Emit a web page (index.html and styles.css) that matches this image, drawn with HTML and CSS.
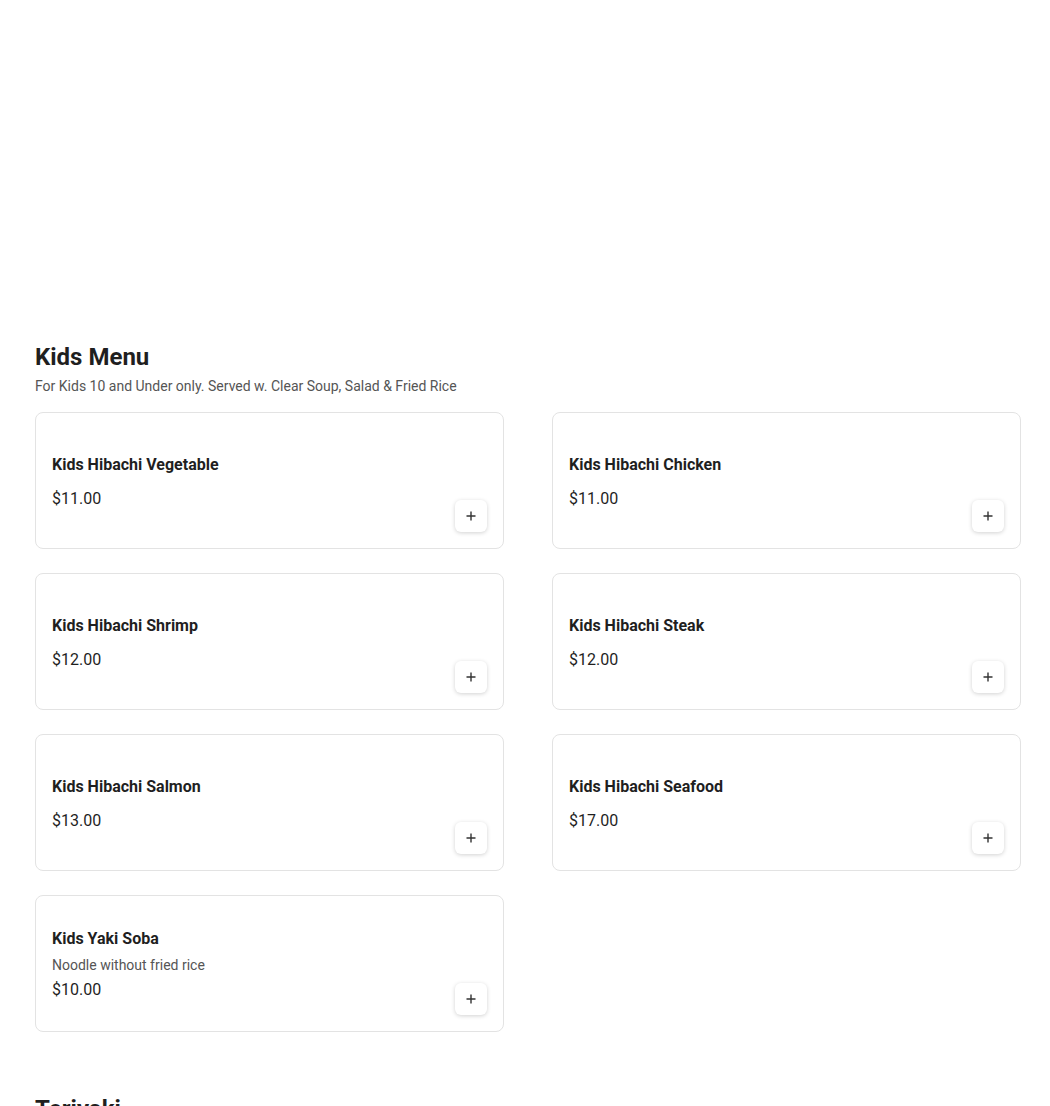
FILE: index.html
```html
<!DOCTYPE html>
<html lang="en">
<head>
<meta charset="utf-8">
<title>Menu</title>
<link rel="stylesheet" href="styles.css">
</head>
<body>
<main class="menu">
  <div class="hero-space"></div>

  <section class="category">
    <h2 class="category-title">Kids Menu</h2>
    <p class="category-desc">For Kids 10 and Under only. Served w. Clear Soup, Salad &amp; Fried Rice</p>
    <div class="items">
      <div class="item">
        <div class="item-info">
          <div class="item-name">Kids Hibachi Vegetable</div>
          <div class="item-price">$11.00</div>
        </div>
        <button class="add-btn" aria-label="Add"><svg viewBox="0 0 12 12" width="12" height="12"><path d="M6 1.5v9M1.5 6h9" stroke="#333" stroke-width="1.4" fill="none"/></svg></button>
      </div>
      <div class="item">
        <div class="item-info">
          <div class="item-name">Kids Hibachi Chicken</div>
          <div class="item-price">$11.00</div>
        </div>
        <button class="add-btn" aria-label="Add"><svg viewBox="0 0 12 12" width="12" height="12"><path d="M6 1.5v9M1.5 6h9" stroke="#333" stroke-width="1.4" fill="none"/></svg></button>
      </div>
      <div class="item">
        <div class="item-info">
          <div class="item-name">Kids Hibachi Shrimp</div>
          <div class="item-price">$12.00</div>
        </div>
        <button class="add-btn" aria-label="Add"><svg viewBox="0 0 12 12" width="12" height="12"><path d="M6 1.5v9M1.5 6h9" stroke="#333" stroke-width="1.4" fill="none"/></svg></button>
      </div>
      <div class="item">
        <div class="item-info">
          <div class="item-name">Kids Hibachi Steak</div>
          <div class="item-price">$12.00</div>
        </div>
        <button class="add-btn" aria-label="Add"><svg viewBox="0 0 12 12" width="12" height="12"><path d="M6 1.5v9M1.5 6h9" stroke="#333" stroke-width="1.4" fill="none"/></svg></button>
      </div>
      <div class="item">
        <div class="item-info">
          <div class="item-name">Kids Hibachi Salmon</div>
          <div class="item-price">$13.00</div>
        </div>
        <button class="add-btn" aria-label="Add"><svg viewBox="0 0 12 12" width="12" height="12"><path d="M6 1.5v9M1.5 6h9" stroke="#333" stroke-width="1.4" fill="none"/></svg></button>
      </div>
      <div class="item">
        <div class="item-info">
          <div class="item-name">Kids Hibachi Seafood</div>
          <div class="item-price">$17.00</div>
        </div>
        <button class="add-btn" aria-label="Add"><svg viewBox="0 0 12 12" width="12" height="12"><path d="M6 1.5v9M1.5 6h9" stroke="#333" stroke-width="1.4" fill="none"/></svg></button>
      </div>
      <div class="item">
        <div class="item-info">
          <div class="item-name">Kids Yaki Soba</div>
          <div class="item-desc">Noodle without fried rice</div>
          <div class="item-price">$10.00</div>
        </div>
        <button class="add-btn" aria-label="Add"><svg viewBox="0 0 12 12" width="12" height="12"><path d="M6 1.5v9M1.5 6h9" stroke="#333" stroke-width="1.4" fill="none"/></svg></button>
      </div>
    </div>
  </section>

  <section class="category">
    <h2 class="category-title">Teriyaki</h2>
  </section>
</main>
</body>
</html>
```

FILE: styles.css
```css
* { box-sizing: border-box; }

html, body {
  margin: 0;
  padding: 0;
  background: #ffffff;
}

body {
  font-family: Roboto, "Noto Sans", Arial, sans-serif;
  color: #1f1f1f;
}

.menu {
  padding: 0 29px 0 35px;
}

.hero-space {
  height: 341px;
}

.category {
  margin-bottom: 61px;
}

.category-title {
  margin: 0;
  font-size: 24px;
  line-height: 32px;
  font-weight: 700;
  color: #1f1f1f;
}

.category-desc {
  margin: 3px 0 16px;
  font-size: 14px;
  line-height: 20px;
  color: #555555;
}

.items {
  display: grid;
  grid-template-columns: 1fr 1fr;
  column-gap: 48px;
  row-gap: 24px;
}

.item {
  display: flex;
  align-items: center;
  min-height: 137px;
  padding: 16px;
  border: 1px solid #e3e3e3;
  border-radius: 8px;
  background: #ffffff;
}

.item-info {
  flex: 1;
  min-width: 0;
  padding-top: 2px;
}

.item-name {
  font-size: 16px;
  line-height: 24px;
  font-weight: 700;
  color: #1f1f1f;
  margin-bottom: 4px;
}

.item-name + .item-price {
  margin-top: 10px;
}

.item-desc {
  font-size: 14px;
  line-height: 20px;
  color: #555555;
  margin-bottom: 3px;
}

.item-price {
  font-size: 16px;
  line-height: 24px;
  color: #1f1f1f;
}

.add-btn {
  align-self: flex-end;
  flex: none;
  width: 32px;
  height: 32px;
  padding: 0;
  display: flex;
  align-items: center;
  justify-content: center;
  border: none;
  border-radius: 6px;
  background: #ffffff;
  box-shadow: 0 1px 4px rgba(0, 0, 0, 0.18);
  cursor: pointer;
}
```
